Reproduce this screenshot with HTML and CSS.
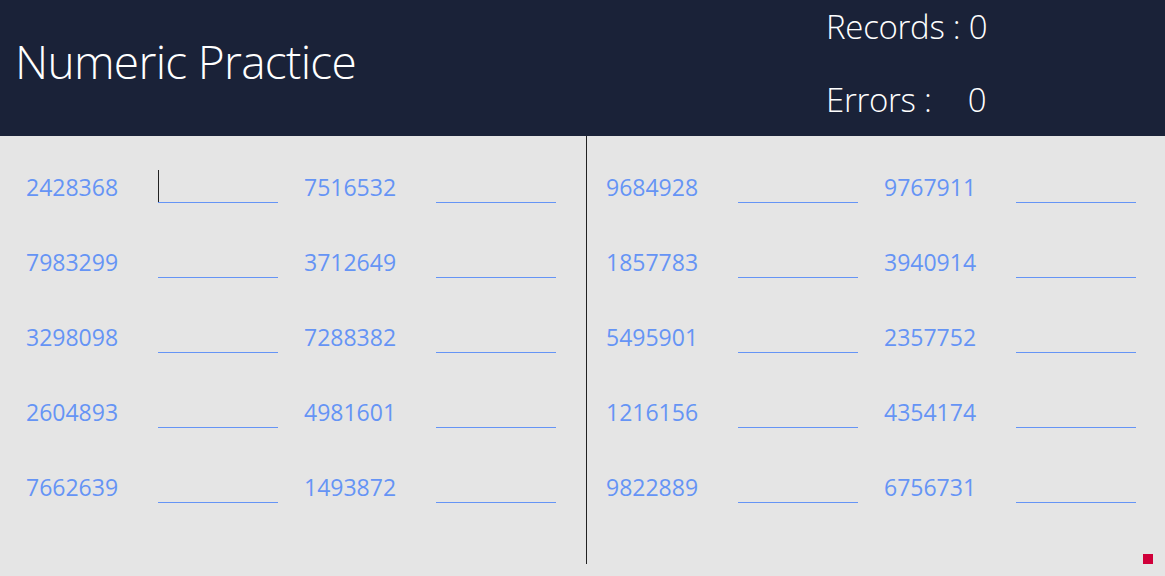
FILE: index.html
```html
<!DOCTYPE html>
<html lang="en">
<head>
<meta charset="utf-8">
<title>Numeric Practice</title>
<link rel="stylesheet" href="styles.css">
</head>
<body>
<header class="topbar">
  <h1 class="title">Numeric Practice</h1>
  <div class="stats">
    <div class="stat">Records : <span class="value">0</span></div>
    <div class="stat">Errors : <span class="value value-gap">0</span></div>
  </div>
</header>
<main class="board">
  <section class="pane pane-left">
    <div class="row">
      <div class="pair"><span class="num">2428368</span><span class="field"><input class="entry" type="text"><span class="caret"></span></span></div>
      <div class="pair"><span class="num">7516532</span><span class="field"><input class="entry" type="text"></span></div>
    </div>
    <div class="row">
      <div class="pair"><span class="num">7983299</span><span class="field"><input class="entry" type="text"></span></div>
      <div class="pair"><span class="num">3712649</span><span class="field"><input class="entry" type="text"></span></div>
    </div>
    <div class="row">
      <div class="pair"><span class="num">3298098</span><span class="field"><input class="entry" type="text"></span></div>
      <div class="pair"><span class="num">7288382</span><span class="field"><input class="entry" type="text"></span></div>
    </div>
    <div class="row">
      <div class="pair"><span class="num">2604893</span><span class="field"><input class="entry" type="text"></span></div>
      <div class="pair"><span class="num">4981601</span><span class="field"><input class="entry" type="text"></span></div>
    </div>
    <div class="row">
      <div class="pair"><span class="num">7662639</span><span class="field"><input class="entry" type="text"></span></div>
      <div class="pair"><span class="num">1493872</span><span class="field"><input class="entry" type="text"></span></div>
    </div>
  </section>
  <section class="pane pane-right">
    <div class="row">
      <div class="pair"><span class="num">9684928</span><span class="field"><input class="entry" type="text"></span></div>
      <div class="pair"><span class="num">9767911</span><span class="field"><input class="entry" type="text"></span></div>
    </div>
    <div class="row">
      <div class="pair"><span class="num">1857783</span><span class="field"><input class="entry" type="text"></span></div>
      <div class="pair"><span class="num">3940914</span><span class="field"><input class="entry" type="text"></span></div>
    </div>
    <div class="row">
      <div class="pair"><span class="num">5495901</span><span class="field"><input class="entry" type="text"></span></div>
      <div class="pair"><span class="num">2357752</span><span class="field"><input class="entry" type="text"></span></div>
    </div>
    <div class="row">
      <div class="pair"><span class="num">1216156</span><span class="field"><input class="entry" type="text"></span></div>
      <div class="pair"><span class="num">4354174</span><span class="field"><input class="entry" type="text"></span></div>
    </div>
    <div class="row">
      <div class="pair"><span class="num">9822889</span><span class="field"><input class="entry" type="text"></span></div>
      <div class="pair"><span class="num">6756731</span><span class="field"><input class="entry" type="text"></span></div>
    </div>
  </section>
  <span class="indicator"></span>
</main>
</body>
</html>
```

FILE: styles.css
```css
* { box-sizing: border-box; }

html, body {
  margin: 0;
  padding: 0;
}

body {
  width: 1165px;
  height: 576px;
  overflow: hidden;
  background: #e5e5e5;
  font-family: "Open Sans", "Liberation Sans", sans-serif;
}

.topbar {
  height: 136px;
  background: #1a2238;
  color: #ffffff;
  display: grid;
  grid-template-columns: 826px 1fr;
  align-items: start;
}

.title {
  margin: 0;
  padding: 33px 0 0 15px;
  font-weight: 300;
  font-size: 46px;
  line-height: 56px;
  letter-spacing: -0.7px;
}

.stats {
  display: flex;
  flex-direction: column;
  padding-top: 4px;
  gap: 27px;
}

.stat {
  font-weight: 300;
  font-size: 33px;
  line-height: 46px;
  letter-spacing: -0.3px;
  white-space: pre;
}

.value-gap {
  margin-left: 28px;
}

.board {
  position: relative;
  height: 440px;
  display: flex;
  padding-bottom: 12px;
}

.pane {
  display: flex;
  flex-direction: column;
  gap: 41px;
  padding-top: 33px;
}

.pane-left {
  width: 587px;
  padding-left: 26px;
  border-right: 1px solid #222222;
}

.pane-right {
  flex: 1;
  padding-left: 19px;
}

.row {
  display: flex;
  gap: 26px;
  height: 34px;
}

.pair {
  display: flex;
  align-items: flex-end;
}

.num {
  width: 132px;
  font-size: 23px;
  line-height: 31px;
  color: #6594f5;
}

.field {
  position: relative;
  display: block;
  width: 120px;
  height: 34px;
}

.entry {
  display: block;
  width: 120px;
  height: 34px;
  margin: 0;
  padding: 0;
  border: none;
  border-bottom: 1px solid #6594f5;
  background: transparent;
  outline: none;
  font-family: inherit;
  font-size: 20px;
}

.caret {
  position: absolute;
  left: 0;
  top: 1px;
  width: 1px;
  height: 32px;
  background: #222222;
}

.indicator {
  position: absolute;
  right: 12px;
  bottom: 12px;
  width: 10px;
  height: 10px;
  background: #d0003a;
}
```
